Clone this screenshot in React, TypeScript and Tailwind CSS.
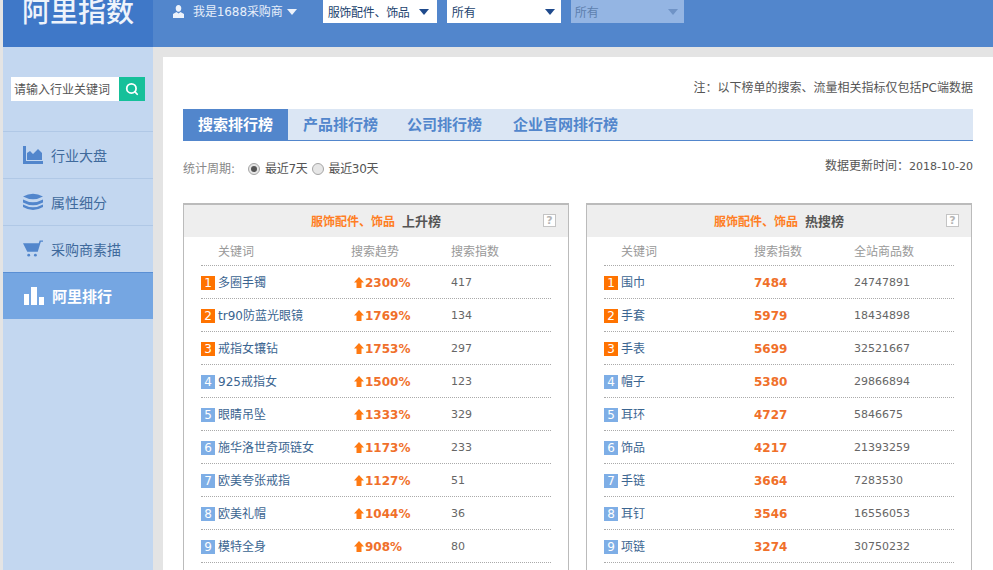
import { Search } from "lucide-react";

const font = { fontFamily: '"DejaVu Sans", "Noto Sans CJK SC", sans-serif' };

const risingRows = [
  ["多圈手镯", "2300%", "417"],
  ["tr90防蓝光眼镜", "1769%", "134"],
  ["戒指女镶钻", "1753%", "297"],
  ["925戒指女", "1500%", "123"],
  ["眼睛吊坠", "1333%", "329"],
  ["施华洛世奇项链女", "1173%", "233"],
  ["欧美夸张戒指", "1127%", "51"],
  ["欧美礼帽", "1044%", "36"],
  ["模特全身", "908%", "80"],
];

const hotRows = [
  ["围巾", "7484", "24747891"],
  ["手套", "5979", "18434898"],
  ["手表", "5699", "32521667"],
  ["帽子", "5380", "29866894"],
  ["耳环", "4727", "5846675"],
  ["饰品", "4217", "21393259"],
  ["手链", "3664", "7283530"],
  ["耳钉", "3546", "16556053"],
  ["项链", "3274", "30750232"],
];

function Caret({ color = "#1f4a8c" }: { color?: string }) {
  return (
    <svg width="10" height="6" viewBox="0 0 10 6" className="shrink-0">
      <path d="M0 0h10L5 6z" fill={color} />
    </svg>
  );
}

function AreaIcon() {
  return (
    <svg width="20" height="18" viewBox="0 0 20 18">
      <path d="M0 0h3v15h17v3H0z" fill="#5286cc" />
      <path d="M4 14V7l3-2 3 3 5-5 4 4v7z" fill="#5286cc" />
    </svg>
  );
}

function LayersIcon() {
  return (
    <svg width="20" height="18" viewBox="0 0 20 18">
      <path d="M0 3.500Q10-2 20 3.500 10 9 0 3.500z" fill="#5286cc" />
      <path d="M0 6.500Q10 12 20 6.500V9.500Q10 15 0 9.500z" fill="#5286cc" />
      <path d="M0 11.500Q10 17 20 11.500V14Q10 20 0 14z" fill="#5286cc" />
    </svg>
  );
}

function CartIcon() {
  return (
    <svg width="21" height="18" viewBox="0 0 21 18">
      <path d="M0 3h16.500l1-3H21v1.500h-2.300L15.500 12h-11z" fill="#5286cc" />
      <circle cx="6" cy="15.500" r="1.500" fill="#5286cc" />
      <circle cx="13" cy="15.500" r="1.500" fill="#5286cc" />
    </svg>
  );
}

function BarsIcon() {
  return (
    <svg width="20" height="18" viewBox="0 0 20 18">
      <path d="M0 7h5v11H0zM7 0h6v18H7zM15 10h5v8h-5z" fill="#fff" />
    </svg>
  );
}

function UpArrow() {
  return (
    <svg width="10" height="11" viewBox="0 0 10 11" className="shrink-0">
      <path d="M5 0l5 5.500H7.500V11h-5V5.500H0z" fill="#ff7a12" />
    </svg>
  );
}

function RankBadge({ rank }: { rank: number }) {
  return (
    <span
      className={`flex h-[14px] w-[14px] shrink-0 items-center justify-center text-[12px] text-white ${
        rank <= 3 ? "bg-[#ff7300]" : "bg-[#7eaee6]"
      }`}
    >
      {rank}
    </span>
  );
}

function Radio({ checked }: { checked?: boolean }) {
  return (
    <span className="flex h-[12px] w-[12px] items-center justify-center rounded-full border border-[#a5a5a5] bg-[#e6e6e6]">
      {checked && <span className="h-[6px] w-[6px] rounded-full bg-[#555]" />}
    </span>
  );
}

function Panel({
  title,
  columns,
  rows,
  trend,
}: {
  title: string;
  columns: string[];
  rows: string[][];
  trend?: boolean;
}) {
  return (
    <section className="h-[400px] w-[386px] border border-t-2 border-[#bbbbbb]">
      <div className="grid h-[32px] grid-cols-[1fr_auto_1fr] items-center bg-[#eeeeee]">
        <span />
        <h3 className="flex items-center gap-[7px] whitespace-nowrap pt-[2px] font-bold">
          <span className="text-[12px] text-[#ff7e24]">服饰配件、饰品</span>
          <span className="text-[13px] text-[#555555]">{title}</span>
        </h3>
        <span className="mb-[2px] mr-[12px] flex h-[13px] w-[13px] items-center justify-center justify-self-end border border-[#c4c4c4] bg-white text-[11px] font-bold leading-none text-[#b5b5b5]">
          ?
        </span>
      </div>
      <div className="mx-[17px]">
        <div className="grid h-[29px] grid-cols-[150px_100px_1fr] items-center border-b border-dotted border-[#aaaaaa] pt-[1px] text-[12px] text-[#999999]">
          <span className="pl-[17px]">{columns[0]}</span>
          <span>{columns[1]}</span>
          <span>{columns[2]}</span>
        </div>
        {rows.map((row, i) => (
          <div
            key={row[0]}
            className="grid h-[33px] grid-cols-[150px_100px_1fr] items-center border-b border-dotted border-[#aaaaaa] pt-[1px]"
          >
            <span className="flex items-center gap-[3px] whitespace-nowrap text-[12px] text-[#3b6591]">
              <RankBadge rank={i + 1} />
              <span className="pt-[1px]">{row[0]}</span>
            </span>
            {trend ? (
              <span className="flex items-center gap-px pl-[3px] text-[12px] font-bold text-[#f0702a]">
                <UpArrow />
                {row[1]}
              </span>
            ) : (
              <span className="text-[12px] font-bold text-[#f0702a]">{row[1]}</span>
            )}
            <span className="pt-[1px] text-[11px] text-[#666666]">{row[2]}</span>
          </div>
        ))}
      </div>
    </section>
  );
}

const menu = [
  { label: "行业大盘", icon: <AreaIcon /> },
  { label: "属性细分", icon: <LayersIcon /> },
  { label: "采购商素描", icon: <CartIcon /> },
];

export default function App() {
  return (
    <div className="h-[570px] w-[993px] overflow-hidden bg-[#e4e4e4] pl-[3px]" style={font}>
      <header className="flex h-[47px] bg-[#5286cc]">
        <div className="h-[47px] w-[150px] overflow-hidden bg-[#3f78c8] pl-[19px]">
          <h1
            className="-mt-[10px] text-[28px] font-medium leading-[40px] text-[#eef3fb]"
            style={{ fontFamily: '"Noto Sans CJK SC", sans-serif' }}
          >
            阿里指数
          </h1>
        </div>
        <div className="flex h-[23px] items-center pl-[20px]">
          <svg width="11" height="13" viewBox="0 0 11 13">
            <path
              d="M5.500 0C7.300 0 8.300 1.400 8.300 3.200 8.300 5 7.300 6.800 5.500 6.800S2.700 5 2.700 3.200C2.700 1.400 3.700 0 5.500 0zM3.500 7l2 1.500L7.500 7 11 9v4H0V9z"
              fill="#eef3fb"
            />
          </svg>
          <span className="ml-[9px] whitespace-nowrap pt-[1px] text-[12px] tracking-[-0.1px] text-[#e8effa]">我是1688采购商</span>
          <span className="ml-[4px]">
            <Caret color="#eef3fb" />
          </span>
        </div>
        <div className="ml-[26px] flex h-[23px] w-[114px] items-center justify-between bg-white pl-[5px] pr-[8px] text-[12px] text-[#23436e]">
          <span className="whitespace-nowrap pt-[2px] tracking-[-0.3px]">服饰配件、饰品</span>
          <Caret />
        </div>
        <div className="ml-[10px] flex h-[23px] w-[114px] items-center justify-between bg-white pl-[5px] pr-[6px] text-[12px] text-[#23436e]">
          <span className="pt-[2px]">所有</span>
          <Caret />
        </div>
        <div className="ml-[10px] flex h-[23px] w-[113px] items-center justify-between bg-[#94b5e3] pl-[4px] pr-[6px] text-[12px] text-[#5d7fae]">
          <span className="pt-[2px]">所有</span>
          <Caret color="#6f93c6" />
        </div>
      </header>

      <div className="flex">
        <aside className="h-[523px] w-[150px] shrink-0 bg-[#c3d7f0]">
          <div className="flex px-[8px] pb-[30px] pt-[30px]">
            <span className="flex h-[24px] w-[108px] items-center bg-white pl-[3px] pt-[2px] text-[12px] text-[#555555]">
              请输入行业关键词
            </span>
            <span className="flex h-[24px] w-[26px] items-center justify-center bg-[#16c09a]">
              <Search size={14} strokeWidth={3} color="#ffffff" />
            </span>
          </div>
          <nav>
            {menu.map((item) => (
              <div
                key={item.label}
                className="flex h-[47px] items-center gap-[8px] border-t border-[#b0c8e6] pl-[20px] text-[14px] text-[#3f6a9c]"
              >
                <span className="flex w-[20px] justify-center">{item.icon}</span>
                <span className="pt-[3px]">{item.label}</span>
              </div>
            ))}
            <div className="flex h-[47px] items-center gap-[8px] border-t border-[#5a8fd4] bg-[#75a6e2] pl-[21px] text-[15px] font-bold text-white">
              <BarsIcon />
              <span className="pt-[2px]">阿里排行</span>
            </div>
          </nav>
        </aside>

        <main className="ml-[10px] mt-[10px] w-[830px] bg-white px-[20px] pt-[23px] text-[12px]">
          <p className="text-right leading-[16px] text-[#555555]">
            注：以下榜单的搜索、流量相关指标仅包括PC端数据
          </p>
          <div className="mt-[13px] flex h-[32px] border-b border-[#5286cc] bg-[#dbe6f4] text-[15px] font-bold text-[#5286cc]">
            <span className="flex w-[105px] items-center justify-center bg-[#5286cc] pt-[1px] text-white">搜索排行榜</span>
            <span className="flex items-center pl-[15px] pt-[1px]">产品排行榜</span>
            <span className="flex items-center pl-[29px] pt-[1px]">公司排行榜</span>
            <span className="flex items-center pl-[31px] pt-[1px]">企业官网排行榜</span>
          </div>
          <div className="flex h-[62px] items-start justify-between">
            <div className="mt-[19px] flex items-center text-[#555555]">
              <span className="w-[65px] text-[#888888]">统计周期:</span>
              <Radio checked />
              <span className="ml-[5px] tracking-[-0.3px]">最近7天</span>
              <span className="ml-[5px]">
                <Radio />
              </span>
              <span className="ml-[4px] tracking-[-0.3px]">最近30天</span>
            </div>
            <span className="mt-[16px] text-[#555555]">
              数据更新时间：<span className="text-[11px]">2018-10-20</span>
            </span>
          </div>
          <div className="flex gap-[17px]">
            <Panel title="上升榜" columns={["关键词", "搜索趋势", "搜索指数"]} rows={risingRows} trend />
            <Panel title="热搜榜" columns={["关键词", "搜索指数", "全站商品数"]} rows={hotRows} />
          </div>
        </main>
      </div>
    </div>
  );
}
